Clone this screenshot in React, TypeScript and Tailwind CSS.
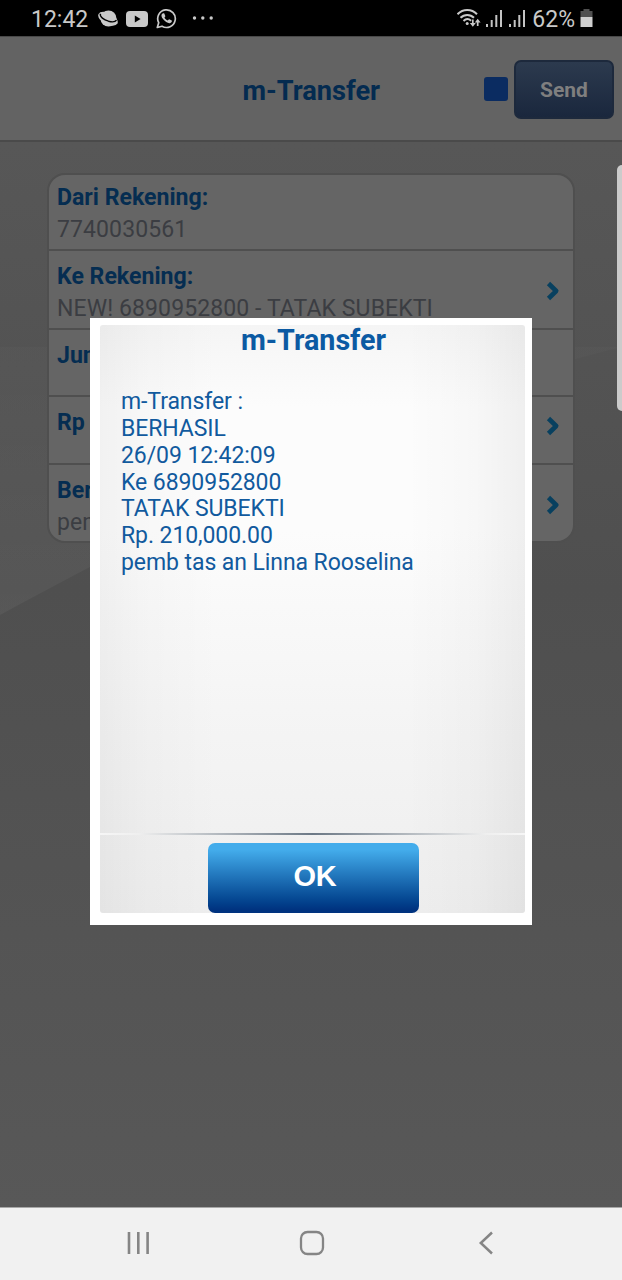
import React from "react";

interface FormRow {
  label: string;
  value?: string;
  arrowClassName?: string;
  className: string;
}

const rows: FormRow[] = [
  { label: "Dari Rekening:", value: "7740030561", className: "h-[74px] pt-[7px]" },
  {
    label: "Ke Rekening:",
    value: "NEW! 6890952800 - TATAK SUBEKTI",
    arrowClassName: "mt-[19px]",
    className: "h-[79px] border-t-2 pt-[10px]",
  },
  { label: "Jumlah", className: "h-[67px] border-t-2 pt-[10px]" },
  { label: "Rp", arrowClassName: "mt-[8px]", className: "h-[68px] border-t-2 pt-[10px]" },
  {
    label: "Berita",
    value: "pemb",
    arrowClassName: "mt-[19px]",
    className: "h-[78px] border-t-2 pt-[10px]",
  },
];

const messageLines = [
  "m-Transfer :",
  "BERHASIL",
  "26/09 12:42:09",
  "Ke 6890952800",
  "TATAK SUBEKTI",
  "Rp. 210,000.00",
  "pemb tas an Linna Rooselina",
];

const SignalIcon: React.FC = () => (
  <svg width="17" height="18" viewBox="0 0 17 18" fill="#c4c4c4" aria-hidden>
    <rect x="0" y="15" width="2" height="3" />
    <rect x="4.7" y="11" width="2" height="7" />
    <rect x="9.3" y="6" width="2" height="12" />
    <rect x="14" y="1" width="2" height="17" />
  </svg>
);

const StatusBar: React.FC = () => (
  <div className="flex h-9 shrink-0 items-center bg-black pr-[29px] pl-[31px] text-[23px] leading-none text-[#c9c9c9]">
    <span className="w-[66px] pt-[2px]">12:42</span>
    <svg className="mt-px" width="22" height="18" viewBox="0 0 22 18" aria-hidden>
      <ellipse cx="11.500" cy="8.500" rx="8" ry="8" fill="#c9c9c9" />
      <ellipse cx="11" cy="8.800" rx="10.600" ry="5.600" transform="rotate(27 11 8.800)" fill="#c9c9c9" />
      <path
        d="M3.400 3.800C2.400 6.800 7 9.900 11.500 11.200c3.800 1 6.700.9 8-1"
        fill="none"
        stroke="#000"
        strokeWidth="1.400"
      />
    </svg>
    <svg className="mt-px ml-[7px]" width="22" height="16" viewBox="0 0 22 16" aria-hidden>
      <rect width="22" height="16" rx="4" fill="#c9c9c9" />
      <path d="M8.800 4.600v6.800l5.800-3.400z" fill="#000" />
    </svg>
    <svg className="ml-[8px]" width="21" height="21" viewBox="0 0 21 21" aria-hidden>
      <path
        d="M1.300 19.500l1.400-4.800A8.800 8.800 0 1 1 6 18.200z"
        fill="none"
        stroke="#c9c9c9"
        strokeWidth="1.700"
        strokeLinejoin="round"
      />
      <path
        d="M7 5.300c-2.200 1-1.900 3.500.2 6 2.200 2.600 5.100 4.500 7.100 3.700 1.400-.5 1.900-1.600 1.500-2.400l-2.500-1.300c-.4-.1-1.300 1.200-1.700 1.200-1.100-.3-2.800-1.900-3.100-3 .1-.5 1-1 .8-1.600l-1-2.400c-.2-.3-.8-.4-1.300-.2z"
        fill="#c9c9c9"
      />
    </svg>
    <svg className="ml-[15px]" width="22" height="4" viewBox="0 0 22 4" fill="#c9c9c9" aria-hidden>
      <circle cx="2.500" cy="2" r="1.700" />
      <circle cx="10.800" cy="2" r="1.700" />
      <circle cx="19.200" cy="2" r="1.700" />
    </svg>

    <div className="ml-auto flex items-center">
      <svg width="25" height="20" viewBox="0 0 25 20" fill="none" stroke="#c9c9c9" aria-hidden>
        <path d="M.5 6.200c5.500-5.600 14-5.600 19.500 0" strokeWidth="2" />
        <path d="M3.500 9.800c3.800-3.900 9.700-3.900 13.500 0" strokeWidth="2" />
        <path d="M6.500 13c2.300-2.300 5.300-2.300 7.600-.3" strokeWidth="2" />
        <circle cx="10.200" cy="15.600" r="1.500" fill="#c9c9c9" stroke="none" />
        <path d="M15.800 11.500v5M20.700 18v-5" strokeWidth="1.700" />
        <path d="M12.800 15h6l-3 3.700zM17.800 14.500h5.800l-2.900-3.800z" fill="#c9c9c9" stroke="none" />
      </svg>
      <div className="ml-[4px] flex gap-[6px]">
        <SignalIcon />
        <SignalIcon />
      </div>
      <span className="ml-[6px] pt-[2px]">62%</span>
      <svg className="ml-[5px]" width="13" height="18" viewBox="0 0 13 18" aria-hidden>
        <path d="M3.500 0h6v2h3v6H.5V2h3z" fill="#505050" />
        <path d="M.5 8h12v10H.5z" fill="#cfcfcf" />
      </svg>
    </div>
  </div>
);

const Header: React.FC = () => (
  <div className="flex h-[106px] shrink-0 items-center border-t border-b-2 border-t-[#484848] border-b-[#4a4a4a] bg-[#636363] pr-2 pl-[242px]">
    <h1 className="pt-[4px] pl-[0.500px] text-[27.200px] leading-8 font-bold text-[#042b50]">
      m-Transfer
    </h1>
    <div className="ml-auto size-6 rounded-[3px] bg-[#0b2c61]" />
    <button className="mt-[2px] ml-[6px] h-[59px] w-[100px] rounded-[7px] border-2 border-[#1d293c] bg-linear-to-b from-[#2c3a4e] to-[#1a273d] pt-[3px] text-[21px] font-bold text-[#7f7f7f]">
      Send
    </button>
  </div>
);

const Arrow: React.FC<{ className: string }> = ({ className }) => (
  <svg className={className} width="14" height="22" viewBox="0 0 14 22" aria-hidden>
    <path
      d="M2.500 3.500L10.200 11l-7.700 7.500"
      fill="none"
      stroke="#08405f"
      strokeWidth="4.600"
      strokeLinejoin="round"
    />
  </svg>
);

const TransferForm: React.FC = () => (
  <div className="mx-[47px] mt-[31px] rounded-[18px] border-2 border-[#4f4f4f] bg-[#656565]">
    {rows.map((row) => (
      <div
        key={row.label}
        className={`flex justify-between border-[#4f4f4f] pr-[13px] pl-[8px] ${row.className}`}
      >
        <div>
          <div className="text-[23.100px] leading-[32px] font-bold text-[#052d51]">{row.label}</div>
          {row.value && (
            <div className="text-[23px] leading-[31px] tracking-[0.100px] whitespace-nowrap text-[#3b3d42]">
              {row.value}
            </div>
          )}
        </div>
        {row.arrowClassName && <Arrow className={row.arrowClassName} />}
      </div>
    ))}
  </div>
);

const ResultDialog: React.FC = () => (
  <div
    role="dialog"
    aria-label="m-Transfer"
    className="absolute top-[318px] left-[90px] h-[607px] w-[442px] bg-white pt-[7px] pr-[7px] pb-[12px] pl-[10px]"
  >
    <div className="flex h-full flex-col rounded-[3px] bg-[linear-gradient(to_right,rgba(0,0,0,0.045)_0%,rgba(0,0,0,0.02)_10%,transparent_28%,transparent_72%,rgba(0,0,0,0.02)_88%,rgba(0,0,0,0.05)_100%),linear-gradient(to_bottom,#f5f5f5_0%,#fcfcfc_14%,#fcfcfc_35%,#f5f5f5_65%,#eeeeee_100%)]">
      <h2 className="pl-[2px] text-center text-[28.700px] leading-[31px] font-bold text-[#0b5aa3]">
        m-Transfer
      </h2>
      <div className="mt-[33px] flex-1 pl-[21px] text-[23px] leading-[26.850px] tracking-[-0.080px] text-[#115a9e]">
        {messageLines.map((line) => (
          <p key={line}>{line}</p>
        ))}
      </div>
      <div className="h-[2px] bg-[linear-gradient(to_right,#f6f6f6_0%,#efefef_9%,#6b7885_50%,#efefef_91%,#f6f6f6_100%)]" />
      <button className="mt-[8px] ml-[108px] h-[70px] w-[211px] shrink-0 rounded-[7px] bg-linear-to-b from-[#43aceb] from-10% to-[#003380] to-95% pb-[2px] pl-[3px] font-['Liberation_Sans',sans-serif] text-[29px] font-bold tracking-[-0.300px] text-white">
        OK
      </button>
    </div>
  </div>
);

const NavigationBar: React.FC = () => (
  <div className="flex h-[73px] shrink-0 items-center border-t border-[#a8a8a8] bg-[#f1f1f1] pb-[3px] pl-[126px]">
    <svg width="25" height="24" viewBox="0 0 25 24" stroke="#858585" strokeWidth="2.600" aria-hidden>
      <path d="M3 1v22M12.300 1v22M21.600 1v22" />
    </svg>
    <svg className="ml-[148px]" width="26" height="26" viewBox="0 0 26 26" fill="none" aria-hidden>
      <rect x="2" y="2" width="22" height="22" rx="6.500" stroke="#858585" strokeWidth="2.300" />
    </svg>
    <svg className="ml-[153px]" width="16" height="24" viewBox="0 0 16 24" fill="none" aria-hidden>
      <path d="M14 1.500L2.800 12 14 22.500" stroke="#858585" strokeWidth="2.500" />
    </svg>
  </div>
);

export default function App() {
  return (
    <div className="relative flex h-[1280px] w-[622px] flex-col overflow-hidden font-[Roboto,sans-serif]">
      <StatusBar />
      <Header />
      <main className="relative flex-1 bg-linear-to-b from-[#575757] via-[#4f4f4f] via-42% to-[#585858]">
        {/* light sweep behind the form */}
        <svg
          className="absolute top-0 left-0"
          width="622"
          height="480"
          viewBox="0 0 622 480"
          aria-hidden
        >
          <defs>
            <linearGradient id="sweep" x1="0" y1="0" x2="0" y2="1">
              <stop offset="0" stopColor="#fff" stopOpacity="0.015" />
              <stop offset="1" stopColor="#fff" stopOpacity="0.045" />
            </linearGradient>
          </defs>
          <path d="M0 205H622C430 250 190 370 0 473z" fill="url(#sweep)" />
        </svg>
        <div className="relative flow-root">
          <TransferForm />
        </div>
      </main>
      <NavigationBar />
      <div className="absolute top-[165px] right-0 h-[246px] w-[5px] rounded-l-[5px] bg-[#cbcbcb]" />
      <ResultDialog />
    </div>
  );
}
